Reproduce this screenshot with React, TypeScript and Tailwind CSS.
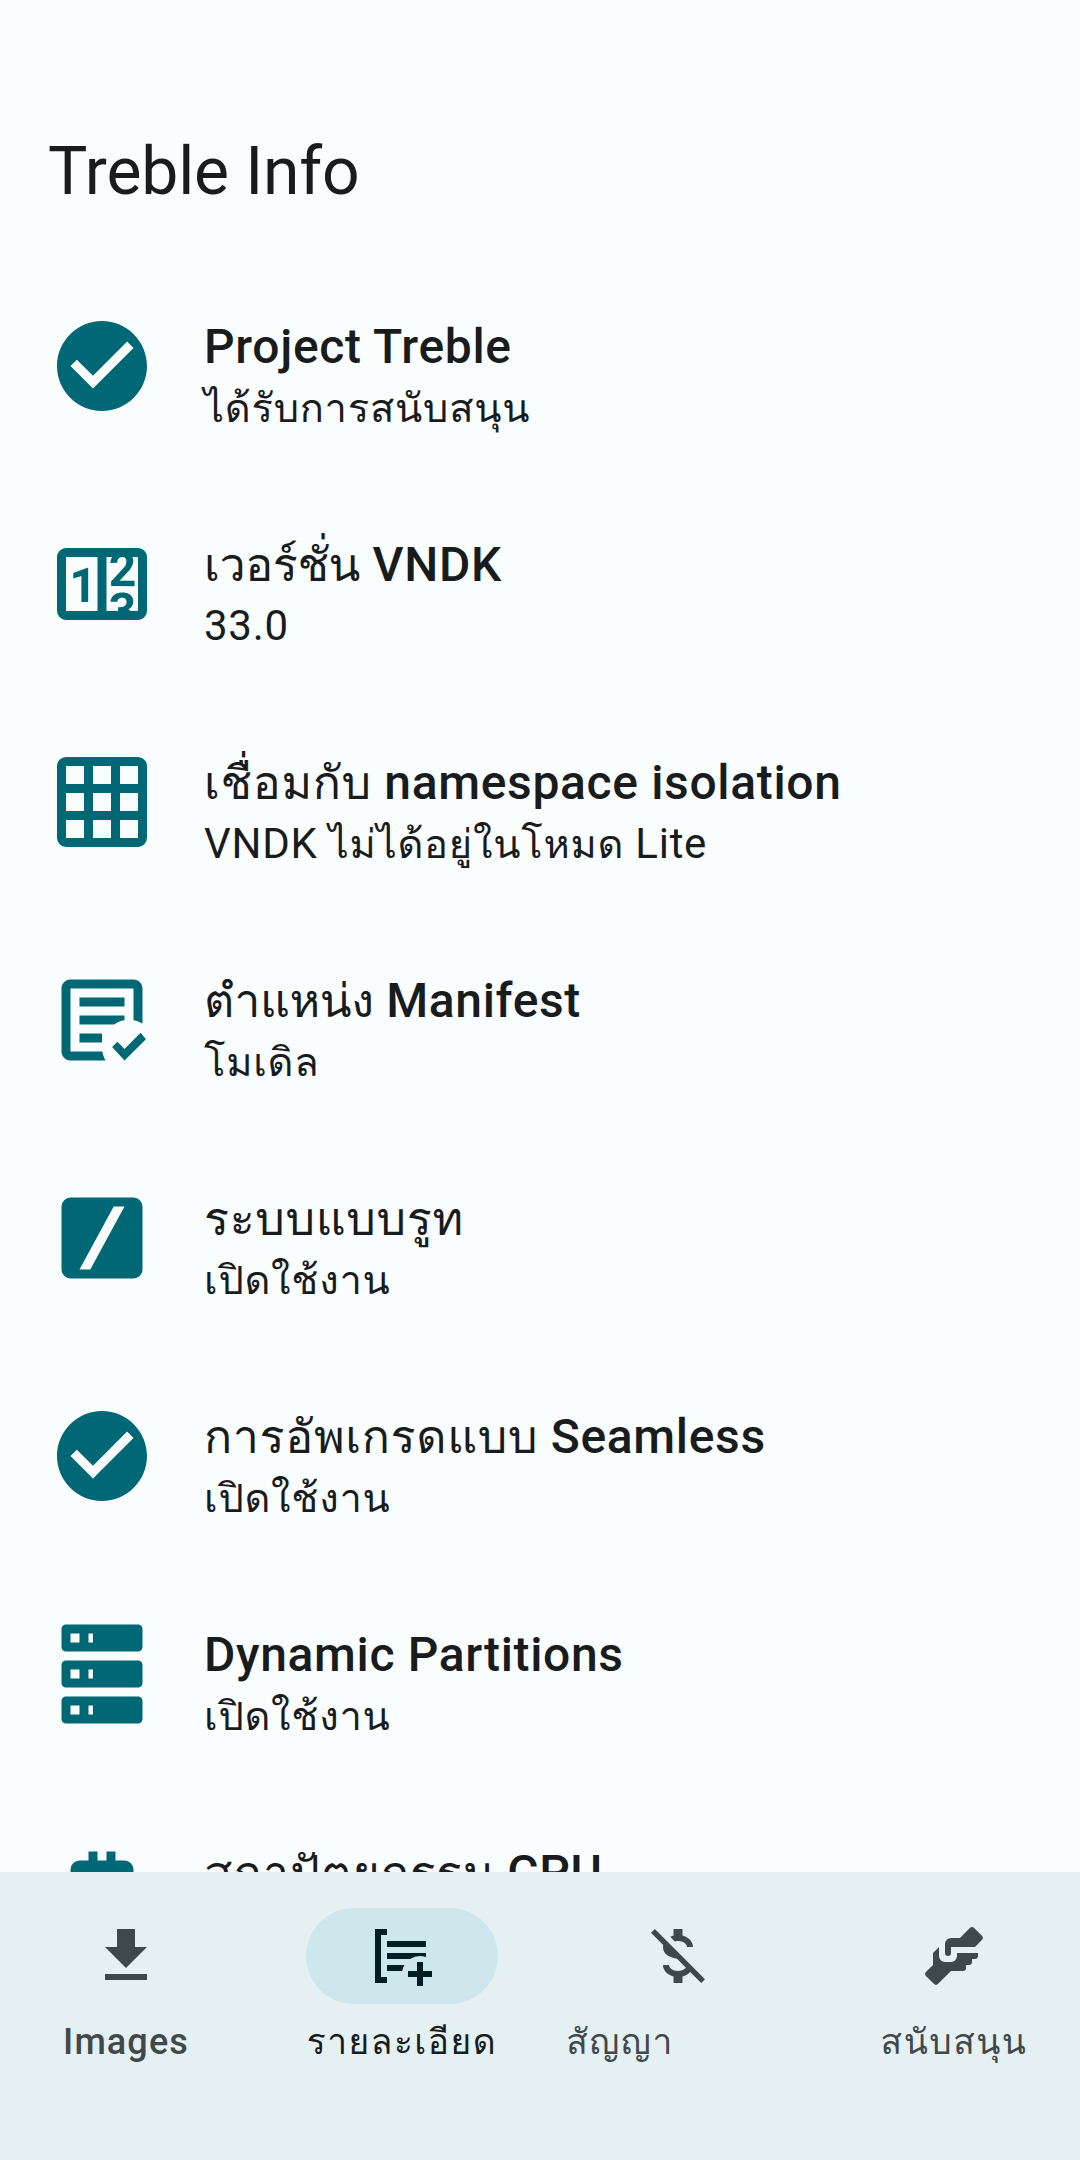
const ICONS = {
  check:
    "M12 2C6.5 2 2 6.5 2 12S6.5 22 12 22 22 17.5 22 12 17.5 2 12 2M10 17L5 12L6.41 10.59L10 14.17L17.59 6.58L19 8L10 17Z",
  counter:
    "M4,4H20A2,2 0 0,1 22,6V18A2,2 0 0,1 20,20H4A2,2 0 0,1 2,18V6A2,2 0 0,1 4,4M4,6V18H11V6H4M20,18V6H18.76C19,6.54 18.95,7.07 18.95,7.13C18.88,7.8 18.41,8.5 18.24,8.75L15.91,11.3L19.23,11.28L19.24,12.5L14.04,12.47L14,11.47C14,11.47 17.05,8.24 17.2,7.95C17.34,7.67 17.91,6 16.5,6C15.27,6.05 15.41,7.3 15.41,7.3L13.87,7.31C13.87,7.31 13.88,6.65 14.25,6H13V18H15.58L15.57,17.14L16.54,17.13C16.54,17.13 17.45,16.97 17.46,16.08C17.5,15.08 16.65,15.08 16.5,15.08C16.37,15.08 15.43,15.13 15.43,15.95H13.91C13.91,15.95 13.95,13.89 16.5,13.89C19.1,13.89 18.96,15.91 18.96,15.91C18.96,15.91 19,17.16 17.85,17.63L18.37,18H20M8.92,16H7.42V10.2L5.62,10.76V9.53L8.76,8.41H8.92V16Z",
  grid:
    "M4 2H20A2 2 0 0 1 22 4V20A2 2 0 0 1 20 22H4A2 2 0 0 1 2 20V4A2 2 0 0 1 4 2M4 4V8H8V4M10 4V8H14V4M16 4V8H20V4M4 10V14H8V10M10 10V14H14V10M16 10V14H20V10M4 16V20H8V16M10 16V20H14V16M16 16V20H20V16Z",
  manifest:
    "M17 21L14.25 18L15.41 16.84L17 18.43L20.59 14.84L21.75 16.25M12.8 21H5C3.89 21 3 20.11 3 19V5C3 3.89 3.89 3 5 3H19C20.11 3 21 3.89 21 5V12.8C20.39 12.45 19.72 12.2 19 12.08V5H5V19H12.08C12.2 19.72 12.45 20.39 12.8 21M12 17H7V15H12M14.68 13H7V11H17V12.08C16.15 12.22 15.37 12.54 14.68 13M17 9H7V7H17",
  slash:
    "M5 3H19A2 2 0 0 1 21 5V19A2 2 0 0 1 19 21H5A2 2 0 0 1 3 19V5A2 2 0 0 1 5 3M7 19H9.4L17 5H14.6Z",
  server:
    "M4,1H20A1,1 0 0,1 21,2V6A1,1 0 0,1 20,7H4A1,1 0 0,1 3,6V2A1,1 0 0,1 4,1M4,9H20A1,1 0 0,1 21,10V14A1,1 0 0,1 20,15H4A1,1 0 0,1 3,14V10A1,1 0 0,1 4,9M4,17H20A1,1 0 0,1 21,18V22A1,1 0 0,1 20,23H4A1,1 0 0,1 3,22V18A1,1 0 0,1 4,17M9,5H10V3H9V5M9,13H10V11H9V13M9,21H10V19H9V21M5,3V5H7V3H5M5,11V13H7V11H5M5,19V21H7V19H5Z",
  cpu:
    "M9 3H11V5H13V3H15V5H17A2 2 0 0 1 19 7V9H21V11H19V13H21V15H19V17A2 2 0 0 1 17 19H15V21H13V19H11V21H9V19H7A2 2 0 0 1 5 17V15H3V13H5V11H3V9H5V7A2 2 0 0 1 7 5H9Z",
  download: "M19 9h-4V3H9v6H5l7 7 7-7zM5 18v2h14v-2H5z",
  details:
    "M3 3H7V5H5V19H7V21H3ZM7 7H20V9H7ZM7 11H20V12.34A6 6 0 0 0 14.68 13H7ZM7 15H12.8A6 6 0 0 0 12.08 17H7ZM17 14H19V17H22V19H19V22H17V19H14V17H17Z",
  moneyOff:
    "M3 4.27L4.28 3L21 19.72L19.73 21L16.06 17.33C15.44 18 14.54 18.55 13.5 18.83V21H10.5V18.83C8.47 18.31 7 16.79 7 15H9C9 16.08 10.37 17 12 17C13.13 17 14.14 16.56 14.65 15.92L11.68 12.95C9.58 12.42 7 11.75 7 9C7 8.77 7 8.55 7.07 8.34L3 4.27M10.5 5.17V3H13.5V5.17C15.53 5.69 17 7.21 17 9H15C15 7.92 13.63 7 12 7C11.63 7 11.28 7.05 10.95 7.13L9.4 5.58L10.5 5.17Z",
  handshake:
    "M11 6H14L17.29 2.7A1 1 0 0 1 18.71 2.7L21.29 5.29A1 1 0 0 1 21.29 6.7L19 9H11V11A1 1 0 0 1 10 12A1 1 0 0 1 9 11V8A2 2 0 0 1 11 6M5 11V15L2.71 17.29A1 1 0 0 0 2.71 18.71L5.29 21.29A1 1 0 0 0 6.71 21.29L11 17H15A1 1 0 0 0 16 16V15H17A1 1 0 0 0 18 14V13H19A1 1 0 0 0 20 12V11H13V12A2 2 0 0 1 11 14H9A2 2 0 0 1 7 12V9L5 11Z",
};

type IconName = keyof typeof ICONS;

function Icon({ name, className }: { name: IconName; className: string }) {
  return (
    <svg viewBox="0 0 24 24" className={className} fill="currentColor" fillRule="evenodd" aria-hidden="true">
      <path d={ICONS[name]} />
    </svg>
  );
}

/** Sets Thai runs in a looped face, leaving Latin runs in the inherited one. */
function Text({ children, thaiClass }: { children: string; thaiClass: string }) {
  return (
    <>
      {children.split(/([\u0E00-\u0E7F]+)/).map((run, i) =>
        i % 2 === 1 ? (
          <span
            key={i}
            className={`font-['Loma','Noto_Sans_Thai_Looped','Noto_Sans_Thai','Noto_Sans',sans-serif] leading-[0] font-normal ${thaiClass}`}
          >
            {run}
          </span>
        ) : (
          run
        ),
      )}
    </>
  );
}

const ROWS: { icon: IconName; title: string; value: string; tracking?: string }[] = [
  { icon: "check", title: "Project Treble", value: "ได้รับการสนับสนุน" },
  { icon: "counter", title: "เวอร์ชั่น VNDK", value: "33.0", tracking: "tracking-[-0.4px]" },
  { icon: "grid", title: "เชื่อมกับ namespace isolation", value: "VNDK ไม่ได้อยู่ในโหมด Lite" },
  { icon: "manifest", title: "ตำแหน่ง Manifest", value: "โมเดิล", tracking: "tracking-[-0.4px]" },
  { icon: "slash", title: "ระบบแบบรูท", value: "เปิดใช้งาน" },
  { icon: "check", title: "การอัพเกรดแบบ Seamless", value: "เปิดใช้งาน" },
  { icon: "server", title: "Dynamic Partitions", value: "เปิดใช้งาน" },
  { icon: "cpu", title: "สถาปัตยกรรม CPU", value: "", tracking: "tracking-[1.2px]" },
];

const TABS: { icon: IconName; label: string; active?: boolean; labelClass?: string }[] = [
  { icon: "download", label: "Images" },
  { icon: "details", label: "รายละเอียด", active: true },
  { icon: "moneyOff", label: "สัญญา", labelClass: "mr-[116px]" },
  { icon: "handshake", label: "สนับสนุน" },
];

export default function App() {
  return (
    <div className="flex h-[2160px] w-[1080px] flex-col overflow-hidden bg-[#fafdfd] font-['Roboto','Noto_Sans',sans-serif] text-[#191c1d]">
      <header className="flex h-[257px] shrink-0 items-end px-12 pb-[45px]">
        <h1 className="text-[66px] leading-[80px] tracking-[-0.15px]">Treble Info</h1>
      </header>

      <main className="min-h-0 flex-1 overflow-hidden">
        {ROWS.map((row) => (
          <div key={row.title} className="flex h-[218px] items-center gap-12 px-12">
            <Icon name={row.icon} className="size-[108px] shrink-0 text-[#006874]" />
            <div className="flex flex-col whitespace-nowrap pt-[22px]">
              <h2 className="h-[62px] text-[48px] leading-[62px] font-medium tracking-[0.65px]">
                <Text thaiClass={`text-[0.97em] ${row.tracking ?? ""}`}>{row.title}</Text>
              </h2>
              <p className="h-[60px] text-[42px] leading-[60px] tracking-[0.75px]">
                <Text thaiClass="text-[0.95em]">{row.value}</Text>
              </p>
            </div>
          </div>
        ))}
      </main>

      <nav className="flex h-72 shrink-0 justify-between bg-[#e5f0f2] pt-9">
        {TABS.map((tab) => (
          <div
            key={tab.label}
            className={`flex w-[252px] flex-col items-center ${tab.active ? "text-[#001f24]" : "text-[#3f484a]"}`}
          >
            <div
              className={`flex h-24 w-48 items-center justify-center rounded-full ${tab.active ? "bg-[#cde7ec]" : ""}`}
            >
              <Icon name={tab.icon} className="size-[72px]" />
            </div>
            <span
              className={`mt-[14px] h-12 text-[36px] leading-[48px] font-medium tracking-[1.1px] whitespace-nowrap ${tab.active ? "text-[#191c1d]" : ""} ${tab.labelClass ?? ""}`}
            >
              <Text thaiClass="text-[0.98em] tracking-[1.5px]">{tab.label}</Text>
            </span>
          </div>
        ))}
      </nav>
    </div>
  );
}
